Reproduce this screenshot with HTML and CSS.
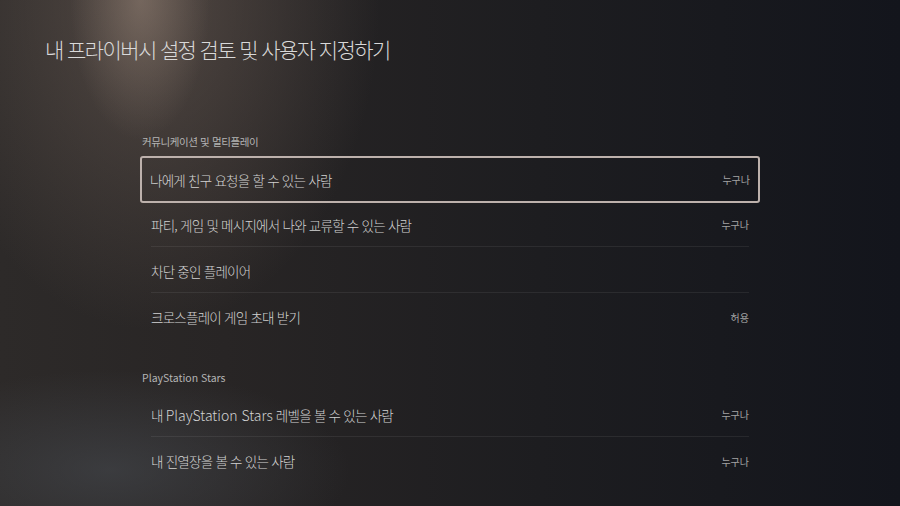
FILE: index.html
```html
<!DOCTYPE html>
<html lang="ko">
<head>
    <meta charset="UTF-8">
    <title>내 프라이버시 설정 검토 및 사용자 지정하기</title>
    <link rel="stylesheet" href="styles.css">
</head>
<body>
<div id="screen">
    <h1 class="title">내 프라이버시 설정 검토 및 사용자 지정하기</h1>
    <div class="group first">
        <h4 class="label">커뮤니케이션 및 멀티플레이</h4>
        <div class="row selected"><div class="in"><span>나에게 친구 요청을 할 수 있는 사람</span><em>누구나</em></div></div>
        <div class="row"><div class="in"><span>파티, 게임 및 메시지에서 나와 교류할 수 있는 사람</span><em>누구나</em></div></div>
        <div class="row"><div class="in"><span>차단 중인 플레이어</span></div></div>
        <div class="row last"><div class="in"><span>크로스플레이 게임 초대 받기</span><em>허용</em></div></div>
    </div>
    <div class="group">
        <h4 class="label latin">PlayStation Stars</h4>
        <div class="row"><div class="in"><span>내 <i class="lat">PlayStation Stars</i> 레벨을 볼 수 있는 사람</span><em>누구나</em></div></div>
        <div class="row last"><div class="in"><span>내 진열장을 볼 수 있는 사람</span><em>누구나</em></div></div>
    </div>
</div>
</body>
</html>
```
FILE: styles.css
```css
*{
    margin: 0;
    padding: 0;
    box-sizing: border-box;
}
body{
    width: 900px;
    height: 506px;
    overflow: hidden;
    font-family: "Noto Sans CJK KR", "Noto Sans", sans-serif;
    background: #16171c;
}
#screen{
    width: 900px;
    height: 506px;
    padding-top: 33px;
    background:
        radial-gradient(ellipse 70px 140px at 140px 0, rgba(160,140,126,0.45), rgba(160,140,126,0) 100%),
        radial-gradient(ellipse 230px 330px at 150px 0, rgba(108,94,86,0.6), rgba(108,94,86,0) 100%),
        radial-gradient(ellipse 240px 100px at 110px 470px, rgba(72,76,82,0.55), rgba(72,76,82,0) 100%),
        linear-gradient(90deg, #2d2a29 0%, #282525 25%, #1d1d20 60%, #13151c 100%);
}
.title{
    margin-left: 45px;
    font-size: 21px;
    font-weight: 300;
    line-height: 32px;
    letter-spacing: -1.6px;
    color: #d9d9d9;
}
.group{
    width: 620px;
    margin-left: 140px;
    margin-top: 30px;
}
.group.first{
    margin-top: 69px;
}
.label{
    font-size: 10.5px;
    font-weight: 400;
    line-height: 16px;
    margin-left: 2px;
    margin-bottom: 6px;
    letter-spacing: -0.4px;
    color: #b4b4b4;
}
.label.latin{
    letter-spacing: 0;
}
.row{
    height: 46px;
    padding: 0 10px;
    border: 1px solid transparent;
    border-radius: 3px;
}
.row .in{
    height: 100%;
    display: flex;
    align-items: center;
    justify-content: space-between;
    border-bottom: 1px solid rgba(255,255,255,0.07);
}
.row.last .in{
    border-bottom: 0;
}
.row span{
    font-size: 13.5px;
    font-weight: 300;
    letter-spacing: -0.75px;
    color: #d2d2d2;
}
.row .lat{
    font-style: normal;
    font-size: 14px;
    letter-spacing: 0;
}
.row em{
    font-style: normal;
    font-size: 10px;
    color: #a3a3a3;
}
.row.selected{
    height: 47px;
    margin-bottom: -1px;
    border: 2px solid #bdb1ac;
    padding: 0 8px;
}
.row.selected .in{
    border-bottom: 0;
}
```
